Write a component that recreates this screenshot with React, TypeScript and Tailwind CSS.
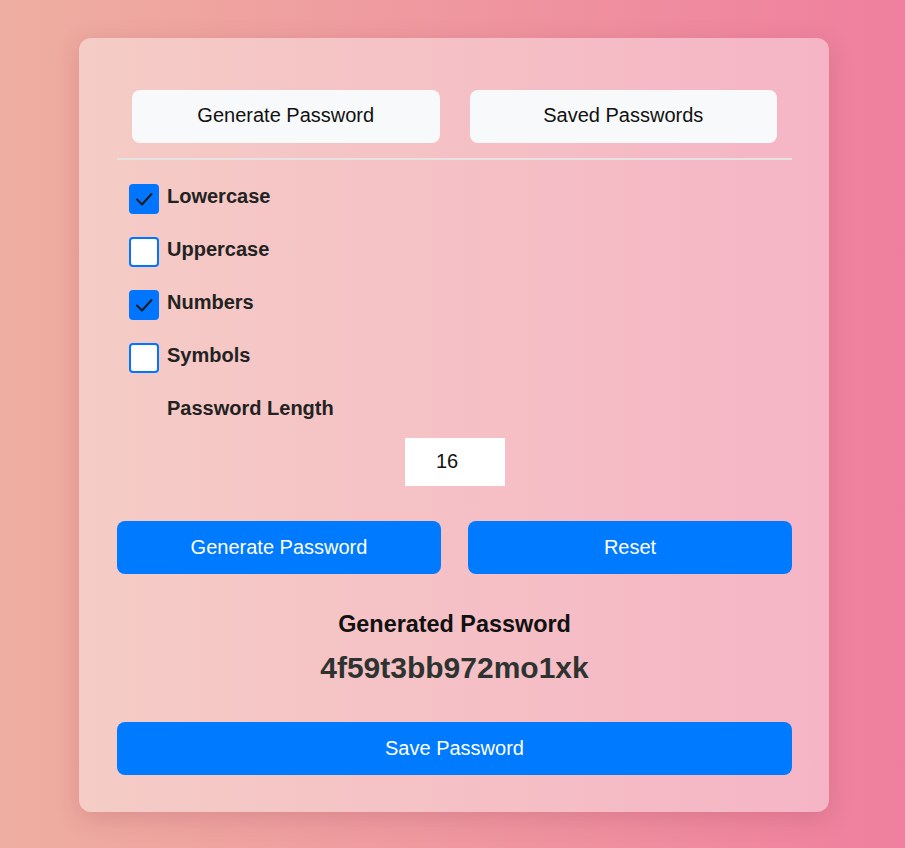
import { useState } from 'react';

const options = [
  { name: 'Lowercase', checked: true },
  { name: 'Uppercase', checked: false },
  { name: 'Numbers', checked: true },
  { name: 'Symbols', checked: false },
];

function Box({ checked }: { checked: boolean }) {
  return checked ? (
    <span className="flex h-[30px] w-[30px] shrink-0 items-center justify-center rounded-[4px] bg-[#0075ff]">
      <svg width="20" height="20" viewBox="0 0 20 20" fill="none">
        <path d="M3 10.5 L8 15.5 L17.5 5" stroke="#1b1b1b" strokeWidth="2" strokeLinecap="round" strokeLinejoin="round" />
      </svg>
    </span>
  ) : (
    <span className="h-[30px] w-[30px] shrink-0 rounded-[4px] border-2 border-[#0075ff] bg-white" />
  );
}

export default function App() {
  const [opts] = useState(options);

  return (
    <div className="min-h-screen bg-gradient-to-r from-[#eeaea0] to-[#ef7f9e] pt-[38px] font-['Liberation_Sans',Arial,sans-serif] text-[#222]">
      <div className="ml-[79px] w-[750px] rounded-xl bg-white/40 pt-[38px] pb-[37px] pl-[38px] pr-[37px] shadow-[0_6px_24px_rgba(120,40,60,0.18)]">
        <div className="mt-[14px] flex gap-[30px] px-[15px]">
          <button className="h-[53px] flex-1 rounded-lg bg-[#f8f9fa] pb-[3px] text-[20px] text-[#111]">Generate Password</button>
          <button className="h-[53px] flex-1 rounded-lg bg-[#f8f9fa] pb-[3px] text-[20px] text-[#111]">Saved Passwords</button>
        </div>
        <div className="mt-[15px] h-[2px] bg-[#e6e2e2]" />

        <div className="mt-[24px] flex flex-col gap-[23px] pl-[12px]">
          {opts.map((o) => (
            <label key={o.name} className="flex items-start gap-[8px]">
              <Box checked={o.checked} />
              <span className="text-[20px] font-bold leading-[24px] text-[#222]">{o.name}</span>
            </label>
          ))}
        </div>

        <div className="mt-[23px] pl-[50px] text-[20px] font-bold leading-[24px] text-[#222]">Password Length</div>
        <div className="mt-[18px] flex justify-center">
          <div className="flex h-12 w-[100px] items-center justify-center bg-white pr-[15px] pb-[2px] text-[20px] text-[#111]">16</div>
        </div>

        <div className="mt-[35px] flex gap-[27px]">
          <button className="h-[53px] flex-1 rounded-lg bg-[#007bff] pb-[2px] text-[20px] text-white">Generate Password</button>
          <button className="h-[53px] flex-1 rounded-lg bg-[#007bff] pb-[2px] text-[20px] text-white">Reset</button>
        </div>

        <div className="mt-[36px] text-center text-[23.4px] font-bold leading-[28px] text-[#111]">Generated Password</div>
        <div className="mt-[12px] text-center text-[30px] font-bold leading-[36px] text-[#2e3331]">4f59t3bb972mo1xk</div>

        <button className="mt-[36px] h-[53px] w-full rounded-lg bg-[#007bff] pb-[2px] text-[20px] text-white">Save Password</button>
      </div>
    </div>
  );
}
